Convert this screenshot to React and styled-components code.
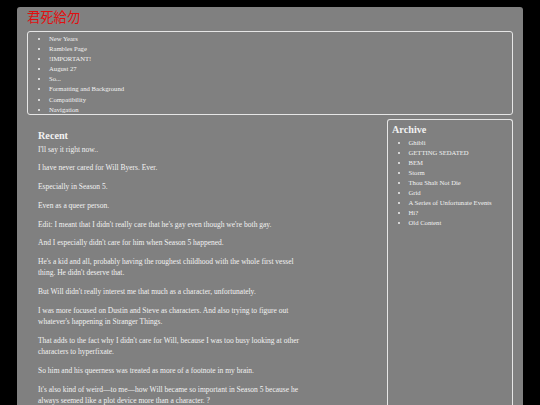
import React from 'react';
import styled, { createGlobalStyle } from 'styled-components';

const GlobalStyle = createGlobalStyle`
  html, body {
    margin: 0;
    padding: 0;
    background: #000;
  }
  body {
    font-family: "Liberation Serif", "Times New Roman", serif;
    color: #f2f2f2;
  }
`

const Page = styled.div`
  margin: 7px 17px 0;
  padding: 0 10px 20px;
  background: #808080;
  border-radius: 3px 3px 0 0;
  min-height: 420px;
`

const Title = styled.h1`
  margin: 0 0 5px;
  font-family: "Noto Sans CJK JP", "Noto Sans CJK SC", sans-serif;
  font-weight: normal;
  font-size: 13.3px;
  color: #e01010;
`

const NavBox = styled.nav`
  box-sizing: border-box;
  height: 84px;
  border: 1px solid #e6e6e6;
  border-radius: 3px;
  padding-top: 2px;
`

const LinkList = styled.ul`
  margin: ${p => p.$top || 0} 0 0;
  padding-left: ${p => p.$indent};
  font-size: 6.67px;
  line-height: 10.1px;
  list-style: disc;
`

const Row = styled.div`
  display: flex;
  gap: 10px;
  margin-top: 4px;
`

const Main = styled.main`
  flex: 1;
  padding: 11px 11px;
`

const Heading = styled.h2`
  margin: 0 0 2px;
  font-size: 10.2px;
  line-height: 11.7px;
  font-weight: bold;
`

const Post = styled.div`
  max-width: 272px;
  font-size: 7.5px;
  line-height: 1.5;

  p {
    margin: 0 0 7.5px;
  }
`

const Sidebar = styled.aside`
  box-sizing: border-box;
  width: 126px;
  min-height: 320px;
  border: 1px solid #e6e6e6;
  border-bottom: none;
  border-radius: 3px 3px 0 0;
  padding: 4px 4px;
`

const nav = [
  'New Years', 'Rambles Page', '!IMPORTANT!', 'August 27', 'So...',
  'Formatting and Background', 'Compatibility', 'Navigation',
]

const archive = [
  'Ghibli', 'GETTING SEDATED', 'BEM', 'Storm', 'Thou Shalt Not Die',
  'Grid', 'A Series of Unfortunate Events', 'Hi?', 'Old Content',
]

const paragraphs = [
  "I'll say it right now..",
  'I have never cared for Will Byers. Ever.',
  'Especially in Season 5.',
  'Even as a queer person.',
  "Edit: I meant that I didn't really care that he's gay even though we're both gay.",
  "And I especially didn't care for him when Season 5 happened.",
  "He's a kid and all, probably having the roughest childhood with the whole first vessel thing. He didn't deserve that.",
  "But Will didn't really interest me that much as a character, unfortunately.",
  "I was more focused on Dustin and Steve as characters. And also trying to figure out whatever's happening in Stranger Things.",
  "That adds to the fact why I didn't care for Will, because I was too busy looking at other characters to hyperfixate.",
  'So him and his queerness was treated as more of a footnote in my brain.',
  "It's also kind of weird\u2014to me\u2014how Will became so important in Season 5 because he always seemed like a plot device more than a character. ?",
]

const App = () => {
  return (
    <>
      <GlobalStyle />
      <Page>
        <Title>君死給勿</Title>
        <NavBox>
          <LinkList $indent="21px">
            {nav.map(n => <li key={n}>{n}</li>)}
          </LinkList>
        </NavBox>
        <Row>
          <Main>
            <Heading>Recent</Heading>
            <Post>
              {paragraphs.map((t, i) => <p key={i}>{t}</p>)}
            </Post>
          </Main>
          <Sidebar>
            <Heading>Archive</Heading>
            <LinkList $indent="16.5px" $top="1px">
              {archive.map(a => <li key={a}>{a}</li>)}
            </LinkList>
          </Sidebar>
        </Row>
      </Page>
    </>
  )
}

export default App
